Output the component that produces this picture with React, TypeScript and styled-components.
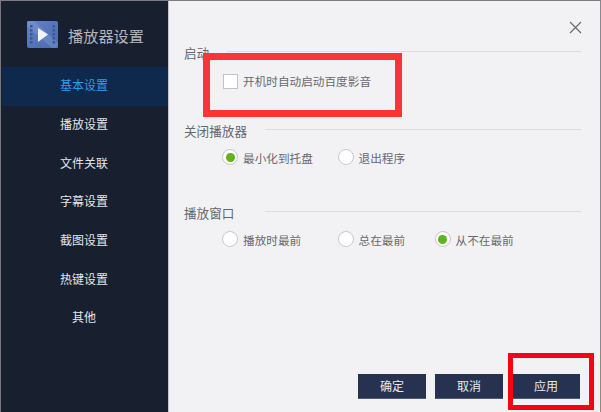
import React from "react";
import styled, { createGlobalStyle } from "styled-components";

const Global = createGlobalStyle`
  html, body { margin: 0; padding: 0; background: #f2f2f4; }
  * { box-sizing: border-box; }
`;

const Font = `"Noto Sans CJK SC", "Liberation Sans", sans-serif`;

const Window = styled.div`
  position: relative;
  width: 601px;
  height: 412px;
  display: flex;
  overflow: hidden;
  border-top: 1px solid #7d7d80;
  border-left: 1px solid #77777c;
  border-right: 1px solid #8a8a8e;
  background: #f2f2f4;
  font-family: ${Font};
`;

const Sidebar = styled.aside`
  width: 168px;
  flex: none;
  display: flex;
  flex-direction: column;
  background: #181f2f;
  border-left: 1px solid #181f2f;
  border-right: 1px solid #c4c4cc;
`;

const Brand = styled.div`
  height: 66px;
  padding: 20px 0 0 25px;
  display: flex;
  align-items: flex-start;
  gap: 10px;
  flex: none;
`;

const BrandTitle = styled.span`
  margin-top: 3px;
  font-size: 15.2px;
  line-height: 22px;
  color: #b4b6bb;
`;

const Nav = styled.nav`
  display: flex;
  flex-direction: column;
`;

const NavItem = styled.div<{ $active?: boolean }>`
  height: 38.7px;
  display: flex;
  align-items: center;
  justify-content: center;
  padding: 0 2px 3px 0;
  font-size: 12px;
  color: ${(p) => (p.$active ? "#2f9be8" : "#e4e6ea")};
  background: ${(p) => (p.$active ? "#0f294c" : "transparent")};
`;

const Main = styled.main`
  flex: 1;
  display: flex;
  flex-direction: column;
  padding: 43px 20px 13px 15px;
  min-width: 0;
`;

const Section = styled.section<{ $height: number }>`
  height: ${(p) => p.$height}px;
  flex: none;
`;

const Heading = styled.div<{ $label: number }>`
  display: grid;
  grid-template-columns: ${(p) => p.$label}px 1fr;
  align-items: center;
  height: 18px;
  font-size: 12.6px;
  line-height: 18px;
  color: #66666c;
`;

const Rule = styled.span`
  height: 1px;
  margin-top: -3px;
  margin-right: -1px;
  background: #dddde0;
`;

const Options = styled.div`
  display: grid;
  grid-template-columns: 115.5px 97px auto;
  justify-content: start;
  margin: 8px 0 0 38px;
`;

const CheckRow = styled.label`
  display: flex;
  align-items: center;
  gap: 5px;
  margin: 10px 0 0 39px;
  font-size: 11.65px;
  line-height: 18px;
  color: #68686e;
`;

const Check = styled.span`
  width: 15px;
  height: 15px;
  background: #fff;
  border: 1px solid #c2c2c6;
`;

const Option = styled.label`
  display: flex;
  align-items: center;
  gap: 5px;
  height: 18px;
  font-size: 11.65px;
  color: #68686e;
`;

const Radio = styled.span<{ $on?: boolean }>`
  width: 16px;
  height: 16px;
  flex: none;
  display: flex;
  align-items: center;
  justify-content: center;
  border-radius: 50%;
  background: #fff;
  border: 1px solid #c8c8cc;
  &::after {
    content: "";
    width: 9px;
    height: 9px;
    border-radius: 50%;
    background: ${(p) => (p.$on ? "#5fb31c" : "transparent")};
  }
`;

const Footer = styled.div`
  margin-top: auto;
  display: flex;
  justify-content: flex-end;
  gap: 9px;
`;

const Button = styled.button`
  width: 68px;
  height: 25px;
  padding: 0 0 1px;
  font-family: ${Font};
  font-size: 12px;
  color: #e8eaee;
  background: #263250;
  border: 1px solid #50596f;
  border-width: 0 0 1px 0;
`;

const Close = styled.button`
  position: absolute;
  top: 20px;
  right: 18px;
  width: 13px;
  height: 13px;
  padding: 0;
  border: 0;
  background: none;
  display: block;
  svg { display: block; }
`;

const Highlight = styled.div<{ $x: number; $y: number; $w: number; $h: number; $t: number; $c: string }>`
  position: absolute;
  left: ${(p) => p.$x}px;
  top: ${(p) => p.$y}px;
  width: ${(p) => p.$w}px;
  height: ${(p) => p.$h}px;
  border: ${(p) => p.$t}px solid ${(p) => p.$c};
  pointer-events: none;
`;

const Logo = () => (
  <svg width="31" height="27" viewBox="0 0 31 27">
    <defs>
      <linearGradient id="g" x1="0" y1="0" x2="1" y2="1">
        <stop offset="0" stopColor="#6484c4" />
        <stop offset="1" stopColor="#4a68ae" />
      </linearGradient>
    </defs>
    <rect x="0" y="0" width="31" height="27" rx="2" fill="url(#g)" />
    <path d="M0 0 L7 0 L31 22 L31 27 L25 27 L0 5 Z" fill="#7f9bd2" opacity="0.45" />
    {[4, 8, 12, 16, 20].map((y) => (
      <g key={y} fill="#3c5799">
        <rect x="3" y={y} width="2.5" height="2.5" />
        <rect x="25.5" y={y} width="2.5" height="2.5" />
      </g>
    ))}
    <path d="M11 7 L21 13.5 L11 21 Z" fill="#f2f4f8" />
  </svg>
);

const tabs = ["基本设置", "播放设置", "文件关联", "字幕设置", "截图设置", "热键设置", "其他"];

export default function App() {
  return (
    <>
      <Global />
      <Window>
        <Sidebar>
          <Brand>
            <Logo />
            <BrandTitle>播放器设置</BrandTitle>
          </Brand>
          <Nav>
            {tabs.map((t, i) => (
              <NavItem key={t} $active={i === 0}>{t}</NavItem>
            ))}
          </Nav>
        </Sidebar>
        <Main>
          <Section $height={78}>
            <Heading $label={43}>启动<Rule /></Heading>
            <CheckRow><Check />开机时自动启动百度影音</CheckRow>
          </Section>
          <Section $height={82}>
            <Heading $label={81}>关闭播放器<Rule /></Heading>
            <Options>
              <Option><Radio $on />最小化到托盘</Option>
              <Option><Radio />退出程序</Option>
            </Options>
          </Section>
          <Section $height={80}>
            <Heading $label={81}>播放窗口<Rule /></Heading>
            <Options>
              <Option><Radio />播放时最前</Option>
              <Option><Radio />总在最前</Option>
              <Option><Radio $on />从不在最前</Option>
            </Options>
          </Section>
          <Footer>
            <Button>确定</Button>
            <Button>取消</Button>
            <Button>应用</Button>
          </Footer>
        </Main>
        <Close aria-label="关闭">
          <svg width="13" height="13" viewBox="0 0 13 13">
            <path d="M1 1 L12 12 M12 1 L1 12" stroke="#6a6a70" strokeWidth="1.2" fill="none" />
          </svg>
        </Close>
        <Highlight $x={202} $y={52} $w={199} $h={64} $t={7} $c="#fb3438" />
        <Highlight $x={507} $y={352} $w={86} $h={57} $t={5} $c="#f40514" />
      </Window>
    </>
  );
}
